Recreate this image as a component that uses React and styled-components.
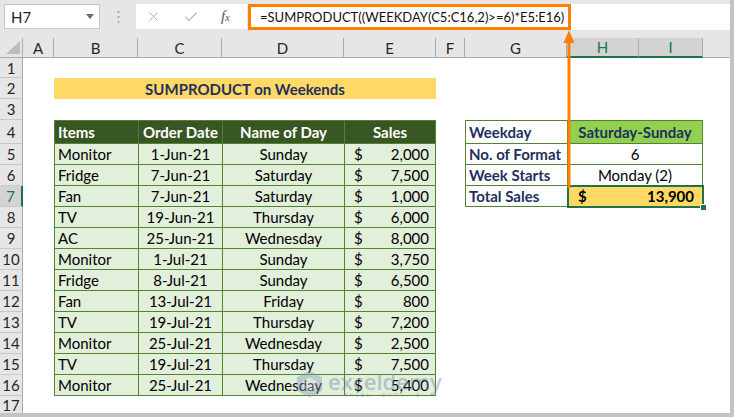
import React from "react";
import styled, { createGlobalStyle } from "styled-components";
import { X, Check } from "lucide-react";

const GlobalStyle = createGlobalStyle`
  html, body {
    margin: 0;
    padding: 0;
    background: #fff;
  }
  body {
    width: 734px;
    height: 417px;
    overflow: hidden;
    font-family: Lato, "Open Sans", sans-serif;
  }
`;

const columns = ["A", "B", "C", "D", "E", "F", "G", "H", "I"];
const selectedCols = ["H", "I"];

const rows = [
  ["Monitor", "1-Jun-21", "Sunday", "2,000"],
  ["Fridge", "7-Jun-21", "Saturday", "7,500"],
  ["Fan", "7-Jun-21", "Saturday", "1,000"],
  ["TV", "19-Jun-21", "Thursday", "6,000"],
  ["AC", "25-Jun-21", "Wednesday", "8,000"],
  ["Monitor", "1-Jul-21", "Sunday", "3,750"],
  ["Fridge", "8-Jul-21", "Sunday", "6,500"],
  ["Fan", "13-Jul-21", "Friday", "800"],
  ["TV", "19-Jul-21", "Thursday", "7,200"],
  ["Monitor", "25-Jul-21", "Wednesday", "2,500"],
  ["TV", "19-Jul-21", "Thursday", "7,500"],
  ["Monitor", "25-Jul-21", "Wednesday", "5,400"],
];

const summary = [
  ["Weekday", "Saturday-Sunday"],
  ["No. of Format", "6"],
  ["Week Starts", "Monday (2)"],
];

const App = () => {
  return (
    <>
      <GlobalStyle />
      <Window>
        <TopBar>
          <NameBox>
            <span>H7</span>
            <svg width="8" height="5" viewBox="0 0 8 5">
              <polygon points="0,0 8,0 4,5" fill="#6d6d6d" />
            </svg>
          </NameBox>
          <Grip>
            <svg width="3" height="14" viewBox="0 0 3 14">
              <circle cx="1.5" cy="2" r="1" fill="#9a9a9a" />
              <circle cx="1.5" cy="7" r="1" fill="#9a9a9a" />
              <circle cx="1.5" cy="12" r="1" fill="#9a9a9a" />
            </svg>
          </Grip>
          <FxBox>
            <X size={15} color="#b4b4b4" strokeWidth={1.6} />
            <Check size={16} color="#b4b4b4" strokeWidth={1.6} />
            <Fx>
              f<sub>x</sub>
            </Fx>
          </FxBox>
          <FormulaBox>
            <Highlight>=SUMPRODUCT((WEEKDAY(C5:C16,2)&gt;=6)*E5:E16)</Highlight>
          </FormulaBox>
        </TopBar>

        <Sheet>
          <Corner $col={1} $row={1}>
            <svg width="14" height="13" viewBox="0 0 14 13">
              <polygon points="14,0 14,13 0,13" fill="#bdbdbd" />
            </svg>
          </Corner>
          {columns.map((c, i) => (
            <ColHeader key={c} $col={i + 2} $row={1} $active={selectedCols.includes(c)}>
              {c}
            </ColHeader>
          ))}
          <ColHeader $col={11} $row={1} $blank />
          {Array.from({ length: 17 }, (_, i) => (
            <RowHeader key={i} $col={1} $row={i + 2} $active={i + 1 === 7}>
              {i + 1}
            </RowHeader>
          ))}

          <Title $col="3 / 7" $row={3}>SUMPRODUCT on Weekends</Title>

          <DataTable $col="3 / 7" $row="5 / 18">
            <HeadCell $align="left">Items</HeadCell>
            <HeadCell>Order Date</HeadCell>
            <HeadCell>Name of Day</HeadCell>
            <HeadCell>Sales</HeadCell>
            {rows.map((r, i) => (
              <React.Fragment key={i}>
                <BodyCell $align="left">{r[0]}</BodyCell>
                <BodyCell>{r[1]}</BodyCell>
                <BodyCell>{r[2]}</BodyCell>
                <MoneyCell>
                  <span>$</span>
                  <span>{r[3]}</span>
                </MoneyCell>
              </React.Fragment>
            ))}
          </DataTable>

          <SummaryTable $col="8 / 11" $row="5 / 9">
            {summary.map((s, i) => (
              <React.Fragment key={s[0]}>
                <LabelCell>{s[0]}</LabelCell>
                <ValueCell $head={i === 0}>{s[1]}</ValueCell>
              </React.Fragment>
            ))}
            <LabelCell>Total Sales</LabelCell>
            <TotalCell>
              <span>$</span>
              <span>13,900</span>
            </TotalCell>
          </SummaryTable>
        </Sheet>

        <Arrow width="14" height="159" viewBox="0 0 14 159">
          <line x1="7" y1="12" x2="7" y2="159" stroke="#ff8000" strokeWidth="3" />
          <polygon points="1.5,14 7,1 12.5,14" fill="#ff8000" />
        </Arrow>

        <Watermark>
          <svg width="27" height="30" viewBox="0 0 28 30">
            <polygon points="14,1 27,8 27,22 14,29 1,22 1,8" fill="#8196bb" />
            <polygon points="14,8 21,12 21,19 14,23 7,19 7,12" fill="#d2dae8" />
          </svg>
          <Brand>
            <BrandName>exceldemy</BrandName>
            <BrandTag>EXCEL · DATA · BI</BrandTag>
          </Brand>
        </Watermark>
      </Window>
    </>
  );
};

export default App;

const Window = styled.div`
  position: relative;
  width: 734px;
  height: 417px;
  box-sizing: border-box;
  border-right: 4px solid #c3c3c3;
  border-bottom: 4px solid #c3c3c3;
  background: #fff;
  display: flex;
  flex-direction: column;
  overflow: hidden;
`;

const TopBar = styled.div`
  height: 38px;
  flex: none;
  box-sizing: border-box;
  background: #e6e6e6;
  display: flex;
  align-items: flex-start;
  padding: 4px 0 0 4px;
`;

const NameBox = styled.div`
  width: 96px;
  height: 25px;
  box-sizing: border-box;
  background: #fff;
  border: 1px solid #c6c6c6;
  display: flex;
  align-items: center;
  justify-content: space-between;
  padding: 0 5px 0 6px;
  font-size: 15px;
  color: #222;
`;

const Grip = styled.div`
  width: 36px;
  height: 25px;
  display: flex;
  align-items: center;
  justify-content: center;
`;

const FxBox = styled.div`
  width: 111px;
  height: 25px;
  box-sizing: border-box;
  background: #fff;
  display: flex;
  align-items: center;
  gap: 22px;
  padding-left: 10px;
`;

const Fx = styled.span`
  font-family: "Liberation Serif", serif;
  font-style: italic;
  font-size: 15px;
  color: #555;
  sub {
    font-size: 10px;
    vertical-align: baseline;
  }
`;

const FormulaBox = styled.div`
  flex: 1;
  height: 26px;
  margin-left: 1px;
  background: #fff;
  display: flex;
`;

const Highlight = styled.div`
  width: 323px;
  height: 26px;
  box-sizing: border-box;
  border: 3px solid #ff8000;
  padding-left: 9px;
  display: flex;
  align-items: center;
  font-size: 13px;
  color: #111;
  white-space: nowrap;
`;

const Sheet = styled.div`
  flex: 1;
  display: grid;
  grid-template-columns: 23px 31px 84px 84px 122px 92px 29px 102px 72px 64px 1fr;
  grid-template-rows: 20px 20px 21px 21px 24px repeat(12, 21px) 1fr;
  font-size: 15px;
`;

const Placed = styled.div`
  grid-column: ${(p) => p.$col};
  grid-row: ${(p) => p.$row};
  box-sizing: border-box;
  min-width: 0;
  min-height: 0;
`;

const Corner = styled(Placed)`
  background: #e6e6e6;
  border-right: 1px solid #ababab;
  border-bottom: 1px solid #ababab;
  display: flex;
  align-items: flex-end;
  justify-content: flex-end;
  padding: 0 2px 3px 0;
`;

const ColHeader = styled(Placed)`
  background: ${(p) => (p.$active ? "#d3d3d3" : "#e6e6e6")};
  color: ${(p) => (p.$active ? "#217346" : "#262626")};
  border-right: 1px solid ${(p) => (p.$blank ? "transparent" : "#ababab")};
  border-bottom: ${(p) => (p.$active ? "2px solid #217346" : "1px solid #ababab")};
  display: flex;
  align-items: center;
  justify-content: center;
`;

const RowHeader = styled(Placed)`
  background: ${(p) => (p.$active ? "#d3d3d3" : "#e6e6e6")};
  color: ${(p) => (p.$active ? "#217346" : "#262626")};
  border-right: ${(p) => (p.$active ? "2px solid #217346" : "1px solid #ababab")};
  border-bottom: 1px solid #c9c9c9;
  display: flex;
  align-items: center;
  justify-content: center;
`;

const Title = styled(Placed)`
  background: #ffd966;
  color: #1f2f5e;
  font-weight: 700;
  display: flex;
  align-items: center;
  justify-content: center;
`;

const DataTable = styled(Placed)`
  display: grid;
  grid-template-columns: 83px 83px 121px 1fr;
  grid-template-rows: 22px repeat(12, 1fr);
  gap: 1px;
  padding: 1px;
  background: #548235;
`;

const HeadCell = styled.div`
  background: #375623;
  color: #fff;
  font-weight: 700;
  display: flex;
  align-items: center;
  justify-content: ${(p) => (p.$align === "left" ? "flex-start" : "center")};
  padding-left: ${(p) => (p.$align === "left" ? "3px" : "0")};
`;

const BodyCell = styled.div`
  background: #e2efda;
  color: #000;
  display: flex;
  align-items: center;
  justify-content: ${(p) => (p.$align === "left" ? "flex-start" : "center")};
  padding-left: ${(p) => (p.$align === "left" ? "3px" : "0")};
`;

const MoneyCell = styled(BodyCell)`
  justify-content: space-between;
  padding: 0 6px 0 9px;
`;

const SummaryTable = styled(Placed)`
  display: grid;
  grid-template-columns: 101px 1fr;
  grid-template-rows: 22px repeat(3, 1fr);
  gap: 1px;
  padding: 1px;
  background: #548235;
`;

const LabelCell = styled.div`
  background: #fff;
  color: #1f2f5e;
  font-weight: 700;
  display: flex;
  align-items: center;
  padding-left: 3px;
`;

const ValueCell = styled.div`
  background: ${(p) => (p.$head ? "#92d050" : "#fff")};
  color: ${(p) => (p.$head ? "#1f2f5e" : "#000")};
  font-weight: ${(p) => (p.$head ? 700 : 400)};
  display: flex;
  align-items: center;
  justify-content: center;
`;

const TotalCell = styled.div`
  position: relative;
  background: #ffd966;
  color: #000;
  font-weight: 700;
  display: flex;
  align-items: center;
  justify-content: space-between;
  padding: 0 8px 0 10px;

  &::before {
    content: "";
    position: absolute;
    inset: -1px -2px -2px -1px;
    border: 2px solid #217346;
  }
  &::after {
    content: "";
    position: absolute;
    right: -5px;
    bottom: -5px;
    width: 5px;
    height: 5px;
    background: #217346;
    border: 1px solid #fff;
  }
`;

const Arrow = styled.svg`
  position: absolute;
  left: 562px;
  top: 29px;
`;

const Watermark = styled.div`
  position: absolute;
  left: 296px;
  top: 369px;
  display: flex;
  align-items: center;
  gap: 5px;
  opacity: 0.4;
  pointer-events: none;
`;

const Brand = styled.div`
  display: flex;
  flex-direction: column;
  align-items: center;
  line-height: 1;
`;

const BrandName = styled.span`
  font-family: "Open Sans", sans-serif;
  font-size: 22px;
  font-weight: 600;
  color: #6a82ad;
`;

const BrandTag = styled.span`
  font-family: "Open Sans", sans-serif;
  font-size: 6px;
  color: #6a82ad;
  letter-spacing: 2px;
  margin-top: 0;
`;
